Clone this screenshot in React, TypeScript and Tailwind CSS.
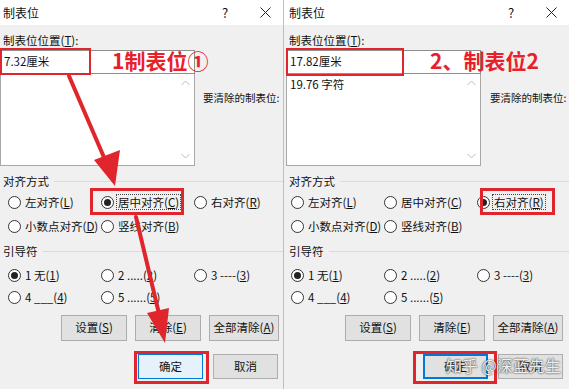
import React from "react";

type RadioProps = { checked?: boolean; focus?: boolean; children: React.ReactNode };

function Radio({ checked, focus, children }: RadioProps) {
  return (
    <div className="flex items-center h-[16px]">
      <span className="w-[13px] h-[13px] rounded-full border border-[#333] bg-white flex items-center justify-center shrink-0">
        {checked && <span className="w-[7px] h-[7px] rounded-full bg-[#222]" />}
      </span>
      <span
        className={
          "ml-[2px] text-[11.5px] leading-[14px] whitespace-nowrap " +
          (focus ? "border border-dotted border-[#444] px-[1px]" : "px-[1px] border border-transparent")
        }
      >
        {children}
      </span>
    </div>
  );
}

function Acc({ k }: { k: string }) {
  return (
    <>
      (<span className="underline">{k}</span>)
    </>
  );
}

type DialogProps = {
  side: "left" | "right";
};

function Dialog({ side }: DialogProps) {
  const isLeft = side === "left";
  return (
    <div
      className={
        "relative h-[389px] flex flex-col " +
        (isLeft ? "w-[284px] border-r border-[#bdbdbd]" : "w-[285px]")
      }
    >
      {/* Title bar */}
      <div className={"h-[25px] bg-white flex items-center text-[12px] text-[#111] " + (isLeft ? "pl-[3px] pr-[8px]" : "pl-[5px] pr-[8px]")}>
        <span>制表位</span>
        <span className="ml-auto w-[20px] text-center text-[13px]">?</span>
        <span className="ml-[20px] w-[20px] flex justify-center">
          <svg width="11" height="11" viewBox="0 0 11 11">
            <path d="M0.5 0.5 L10.5 10.5 M10.5 0.5 L0.5 10.5" stroke="#222" strokeWidth="1" />
          </svg>
        </span>
      </div>

      {/* Body */}
      <div className={"flex-1 bg-[#f0f0f0] flex flex-col text-[#111] text-[11.5px] " + (isLeft ? "pl-0" : "pl-[2px]")}>
        <div className="mt-[7px] pl-[3px] leading-[16px]">
          制表位位置(<span className="underline">T</span>):
        </div>
        <div className="flex mt-[2px]">
          <div className="flex flex-col w-[195px] shrink-0">
            <div className="h-[24px] border border-[#8f8f8f] bg-white flex items-center pl-[3px]">
              {isLeft ? "7.32厘米" : "17.82厘米"}
            </div>
            <div className="h-[92px] border border-t-0 border-[#a8a8a8] bg-white flex">
              <div className="flex-1 pl-[3px] pt-[2px] leading-[16px]">
                {isLeft ? "" : "19.76 字符"}
              </div>
              <div className="w-[17px] flex flex-col items-center justify-between py-[6px]">
                <svg width="9" height="6" viewBox="0 0 9 6">
                  <path d="M0.5 5 L4.5 1 L8.5 5" stroke="#bdbdbd" strokeWidth="1" fill="none" />
                </svg>
                <svg width="9" height="6" viewBox="0 0 9 6">
                  <path d="M0.5 1 L4.5 5 L8.5 1" stroke="#bdbdbd" strokeWidth="1" fill="none" />
                </svg>
              </div>
            </div>
          </div>
          <div className={"mt-[40px] text-[10.5px] leading-[16px] whitespace-nowrap " + (isLeft ? "ml-[8px]" : "ml-[9px]")}>
            要清除的制表位:
          </div>
        </div>

        {/* 对齐方式 */}
        <div className="flex items-center mt-[7px] pl-[3px] leading-[16px]">
          <span>对齐方式</span>
          <span className="flex-1 h-px bg-[#dadada] ml-[5px]" />
        </div>
        <div className={"grid grid-cols-[93px_93px_93px] gap-y-[8px] mt-[5px] " + (isLeft ? "pl-[8px]" : "pl-[5px]")}>
          <Radio>左对齐<Acc k="L" /></Radio>
          <Radio checked={isLeft} focus={isLeft}>居中对齐<Acc k="C" /></Radio>
          <Radio checked={!isLeft} focus={!isLeft}>右对齐<Acc k="R" /></Radio>
          <Radio>小数点对齐<Acc k="D" /></Radio>
          <Radio>竖线对齐<Acc k="B" /></Radio>
        </div>

        {/* 引导符 */}
        <div className="flex items-center mt-[9px] pl-[3px] leading-[16px]">
          <span>引导符</span>
          <span className="flex-1 h-px bg-[#dadada] ml-[5px]" />
        </div>
        <div className={"grid grid-cols-[93px_93px_93px] gap-y-[6px] mt-[8px] " + (isLeft ? "pl-[8px]" : "pl-[5px]")}>
          <Radio checked>1 无<Acc k="1" /></Radio>
          <Radio>2 .....<Acc k="2" /></Radio>
          <Radio>3 ----<Acc k="3" /></Radio>
          <Radio>4 ___<Acc k="4" /></Radio>
          <Radio>5 ......<Acc k="5" /></Radio>
        </div>

        {/* Buttons */}
        <div className={"flex justify-end gap-[8px] mt-[10px] " + (isLeft ? "pr-[4px]" : "pr-[6px]")}>
          <div className="w-[66px] h-[26px] bg-[#e1e1e1] border border-[#adadad] flex items-center justify-center">
            设置(<span className="underline">S</span>)
          </div>
          <div className="w-[66px] h-[26px] bg-[#e1e1e1] border border-[#adadad] flex items-center justify-center">
            清除(<span className="underline">E</span>)
          </div>
          <div className="w-[70px] h-[26px] bg-[#e1e1e1] border border-[#adadad] flex items-center justify-center">
            全部清除(<span className="underline">A</span>)
          </div>
        </div>
        <div className={"flex justify-end gap-[10px] mt-[13px] " + (isLeft ? "pr-[5px]" : "pr-[6px]")}>
          <div
            className={
              "w-[65px] h-[25px] flex items-center justify-center " +
              (isLeft ? "bg-[#e5f1fb] border border-[#0078d7]" : "bg-[#e1e1e1] border-2 border-[#0078d7]")
            }
          >
            确定
          </div>
          <div className="w-[65px] h-[25px] bg-[#e1e1e1] border border-[#adadad] flex items-center justify-center">
            取消
          </div>
        </div>
      </div>

      {/* Red annotation boxes */}
      {isLeft ? (
        <>
          <div className="absolute left-0 top-[48px] w-[91px] h-[27px] border-[2px] border-[#e0262c]" />
          <div className="absolute left-[90px] top-[188px] w-[94px] h-[27px] border-[3px] border-[#e0262c]" />
          <div className="absolute left-[134px] top-[351px] w-[75px] h-[33px] border-[3px] border-[#e0262c]" />
          <div className="absolute left-[112px] top-[46px] text-[21px] leading-[28px] font-bold text-[#e8202a] whitespace-nowrap">
            1制表位①
          </div>
        </>
      ) : (
        <>
          <div className="absolute left-[2px] top-[48px] w-[118px] h-[28px] border-[2px] border-[#e0262c]" />
          <div className="absolute left-[196px] top-[188px] w-[75px] h-[27px] border-[3px] border-[#e0262c]" />
          <div className="absolute left-[129px] top-[351px] w-[84px] h-[33px] border-[3px] border-[#e0262c]" />
          <div className="absolute left-[146px] top-[46px] text-[21px] leading-[28px] font-bold text-[#e8202a] whitespace-nowrap">
            2、制表位2
          </div>
        </>
      )}
    </div>
  );
}

export default function App() {
  return (
    <div className="relative w-[569px] h-[389px] overflow-hidden flex bg-[#f0f0f0] font-['Noto_Sans_CJK_SC','Noto_Sans',sans-serif]">
      <Dialog side="left" />
      <Dialog side="right" />

      {/* Arrows */}
      <svg className="absolute left-0 top-0 pointer-events-none" width="569" height="389" viewBox="0 0 569 389">
        <line x1="69" y1="76" x2="106" y2="162" stroke="#e0262c" strokeWidth="4" strokeLinecap="round" />
        <polygon points="115,186 94,160 120,150" fill="#e0262c" />
        <line x1="136" y1="217" x2="160" y2="318" stroke="#e0262c" strokeWidth="4" strokeLinecap="round" />
        <polygon points="165,343 147,313 169,308" fill="#e0262c" />
      </svg>

      {/* Watermark */}
      <div className="absolute left-[446px] top-[354px] text-[16px] leading-[22px] text-white/90 whitespace-nowrap [text-shadow:0_0_2px_#444,0_0_1px_#444]">
        知乎 @深蓝先生
      </div>
    </div>
  );
}
